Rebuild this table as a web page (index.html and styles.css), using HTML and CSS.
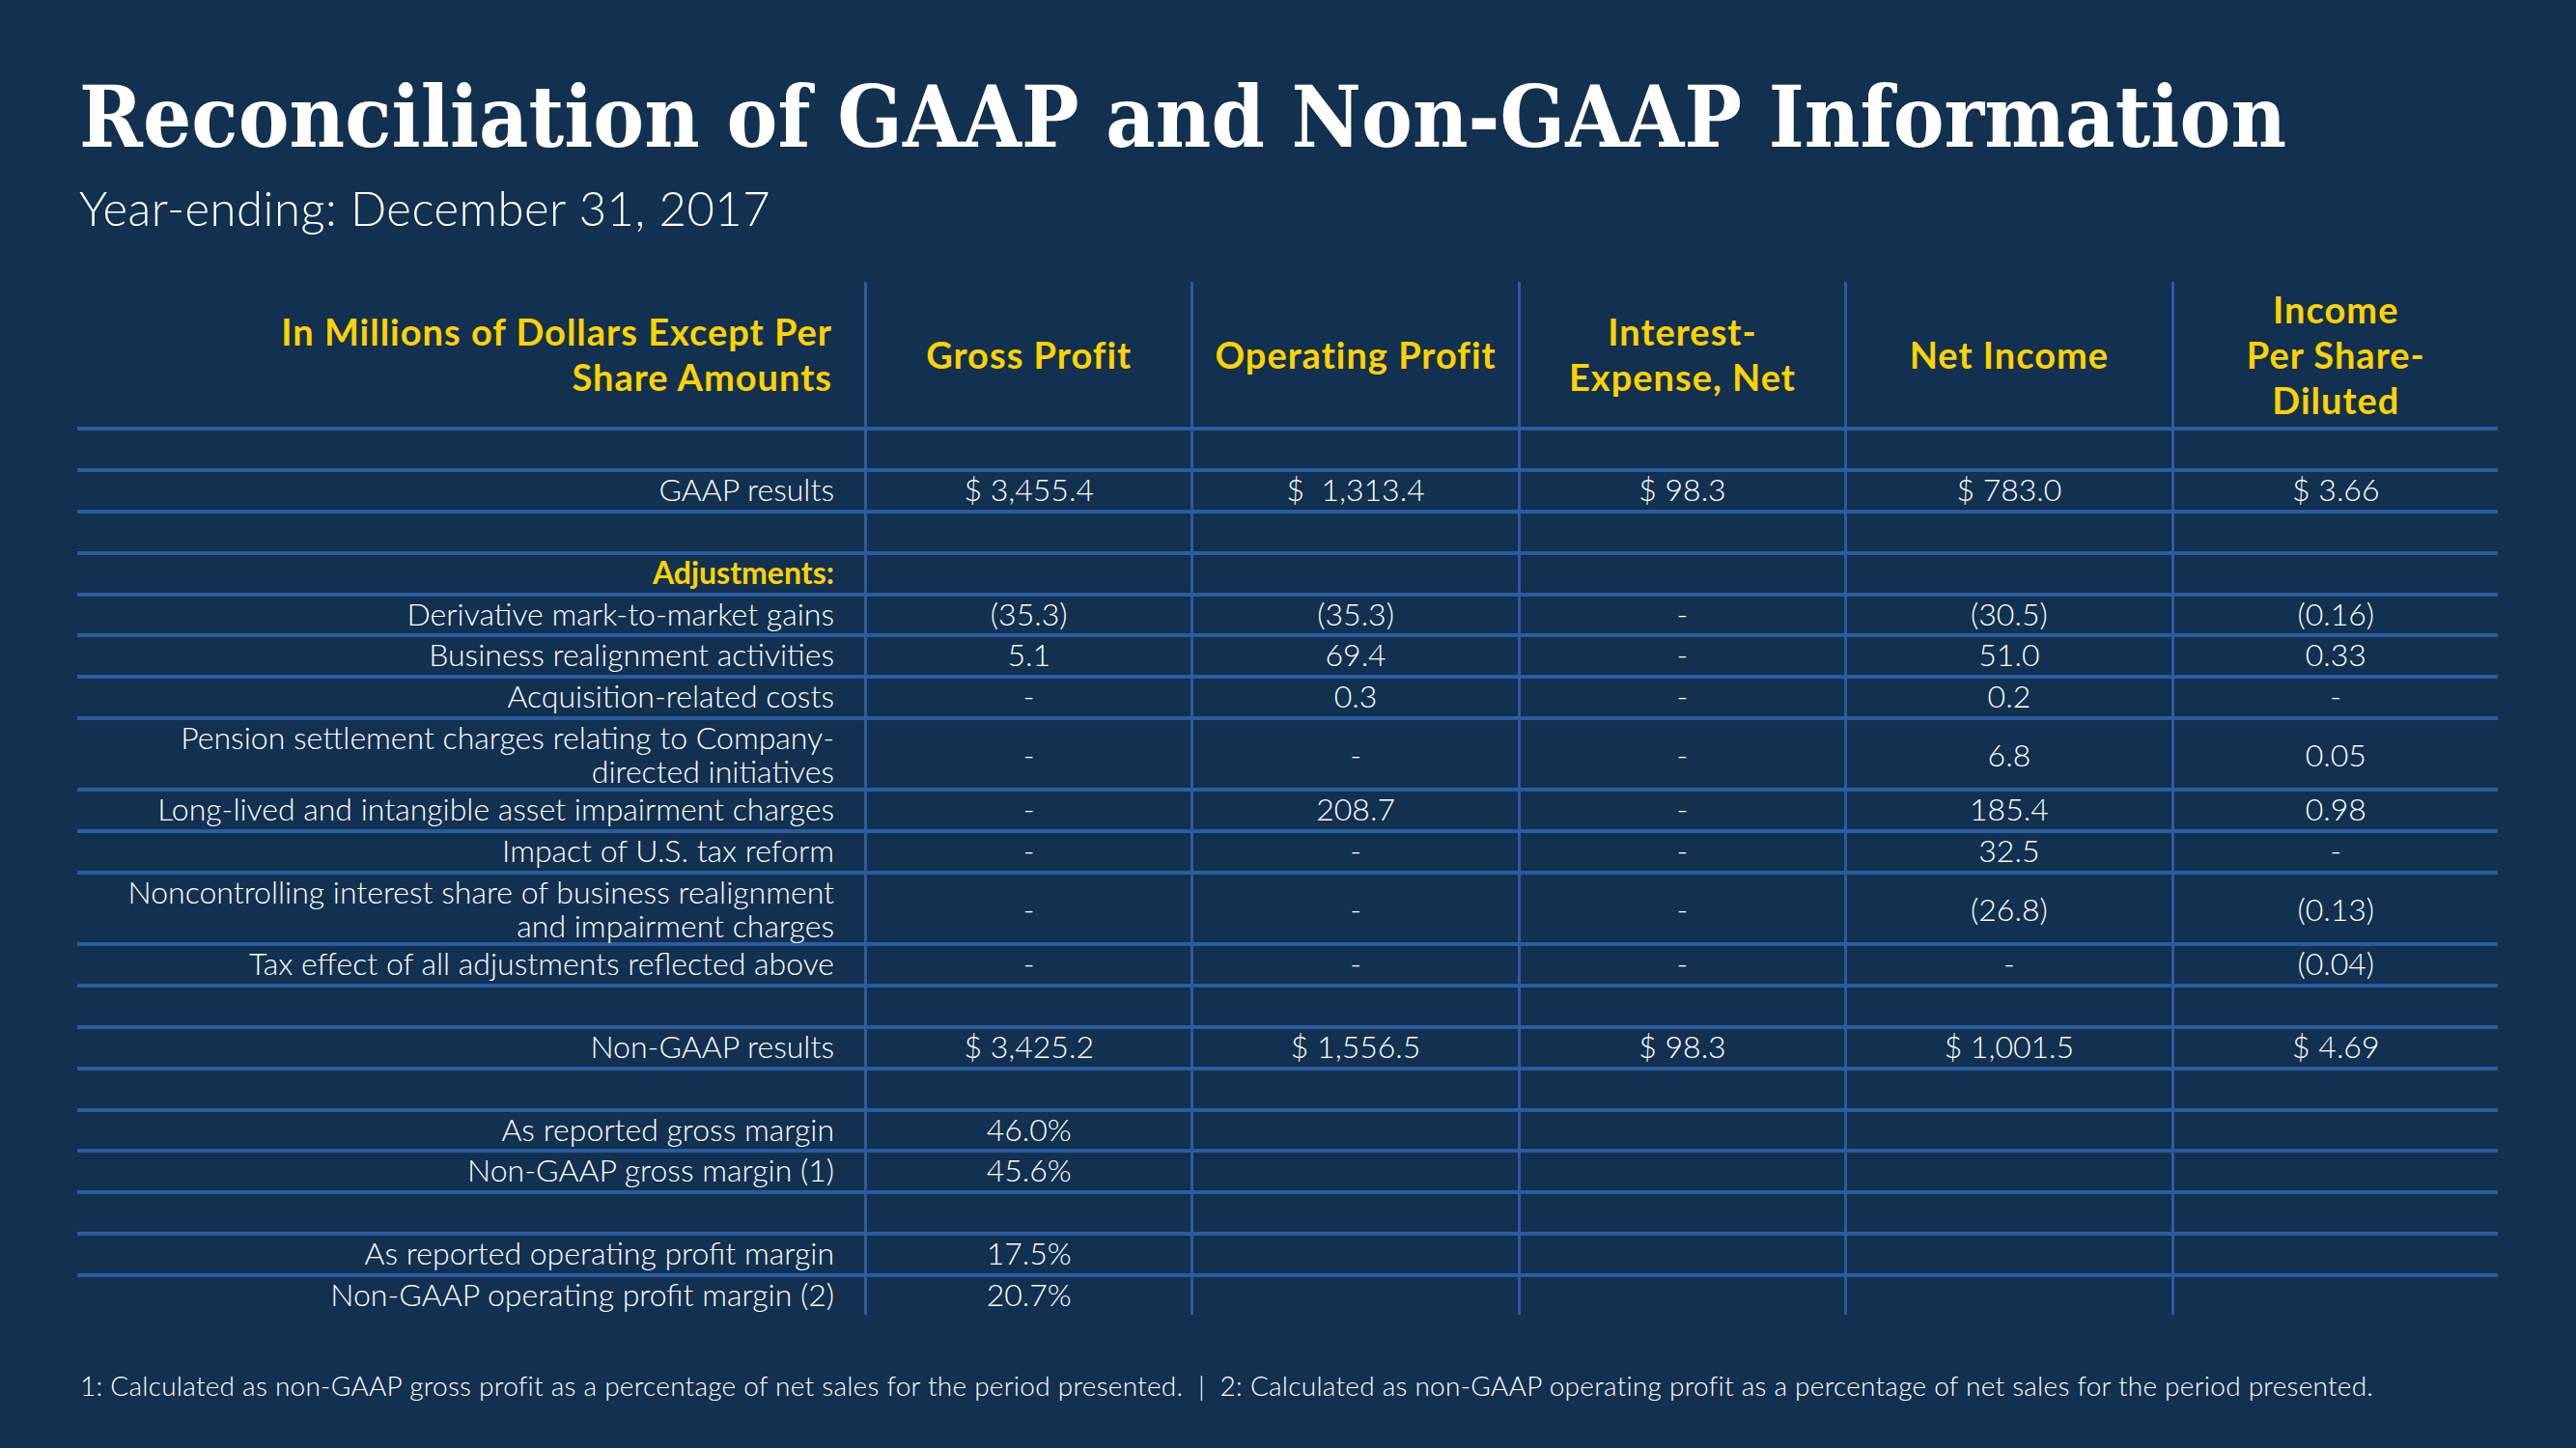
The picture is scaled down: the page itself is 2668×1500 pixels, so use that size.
FILE: index.html
```html
<!DOCTYPE html>
<html lang="en">
<head>
<meta charset="utf-8">
<title>Reconciliation of GAAP and Non-GAAP Information</title>
<link rel="stylesheet" href="styles.css">
</head>
<body>
<main class="slide">
  <h1 class="title">Reconciliation of GAAP and Non-GAAP Information</h1>
  <p class="subtitle">Year-ending: December 31, 2017</p>

  <div class="table">
    <div class="row head">
      <div class="cell label"><span class="stack">In Millions of Dollars Except Per<br>Share Amounts</span></div>
      <div class="cell">Gross Profit</div>
      <div class="cell">Operating Profit</div>
      <div class="cell"><span class="stack">Interest-<br>Expense, Net</span></div>
      <div class="cell">Net Income</div>
      <div class="cell"><span class="stack">Income<br>Per Share-<br>Diluted</span></div>
    </div>
    <div class="row"><div class="cell label"></div><div class="cell"></div><div class="cell"></div><div class="cell"></div><div class="cell"></div><div class="cell"></div></div>
    <div class="row"><div class="cell label">GAAP results</div><div class="cell">$&nbsp;3,455.4</div><div class="cell">$&nbsp;&nbsp;1,313.4</div><div class="cell">$&nbsp;98.3</div><div class="cell">$&nbsp;783.0</div><div class="cell">$&nbsp;3.66</div></div>
    <div class="row"><div class="cell label"></div><div class="cell"></div><div class="cell"></div><div class="cell"></div><div class="cell"></div><div class="cell"></div></div>
    <div class="row"><div class="cell label accent">Adjustments:</div><div class="cell"></div><div class="cell"></div><div class="cell"></div><div class="cell"></div><div class="cell"></div></div>
    <div class="row"><div class="cell label">Derivative mark-to-market gains</div><div class="cell">(35.3)</div><div class="cell">(35.3)</div><div class="cell">-</div><div class="cell">(30.5)</div><div class="cell">(0.16)</div></div>
    <div class="row"><div class="cell label">Business realignment activities</div><div class="cell">5.1</div><div class="cell">69.4</div><div class="cell">-</div><div class="cell">51.0</div><div class="cell">0.33</div></div>
    <div class="row"><div class="cell label">Acquisition-related costs</div><div class="cell">-</div><div class="cell">0.3</div><div class="cell">-</div><div class="cell">0.2</div><div class="cell">-</div></div>
    <div class="row tall"><div class="cell label"><span class="stack">Pension settlement charges relating to Company-<br>directed initiatives</span></div><div class="cell">-</div><div class="cell">-</div><div class="cell">-</div><div class="cell">6.8</div><div class="cell">0.05</div></div>
    <div class="row"><div class="cell label">Long-lived and intangible asset impairment charges</div><div class="cell">-</div><div class="cell">208.7</div><div class="cell">-</div><div class="cell">185.4</div><div class="cell">0.98</div></div>
    <div class="row"><div class="cell label">Impact of U.S. tax reform</div><div class="cell">-</div><div class="cell">-</div><div class="cell">-</div><div class="cell">32.5</div><div class="cell">-</div></div>
    <div class="row tall"><div class="cell label"><span class="stack">Noncontrolling interest share of business realignment<br>and impairment charges</span></div><div class="cell">-</div><div class="cell">-</div><div class="cell">-</div><div class="cell">(26.8)</div><div class="cell">(0.13)</div></div>
    <div class="row"><div class="cell label">Tax effect of all adjustments reflected above</div><div class="cell">-</div><div class="cell">-</div><div class="cell">-</div><div class="cell">-</div><div class="cell">(0.04)</div></div>
    <div class="row"><div class="cell label"></div><div class="cell"></div><div class="cell"></div><div class="cell"></div><div class="cell"></div><div class="cell"></div></div>
    <div class="row"><div class="cell label">Non-GAAP results</div><div class="cell">$&nbsp;3,425.2</div><div class="cell">$&nbsp;1,556.5</div><div class="cell">$&nbsp;98.3</div><div class="cell">$&nbsp;1,001.5</div><div class="cell">$&nbsp;4.69</div></div>
    <div class="row"><div class="cell label"></div><div class="cell"></div><div class="cell"></div><div class="cell"></div><div class="cell"></div><div class="cell"></div></div>
    <div class="row"><div class="cell label">As reported gross margin</div><div class="cell">46.0%</div><div class="cell"></div><div class="cell"></div><div class="cell"></div><div class="cell"></div></div>
    <div class="row"><div class="cell label">Non-GAAP gross margin (1)</div><div class="cell">45.6%</div><div class="cell"></div><div class="cell"></div><div class="cell"></div><div class="cell"></div></div>
    <div class="row"><div class="cell label"></div><div class="cell"></div><div class="cell"></div><div class="cell"></div><div class="cell"></div><div class="cell"></div></div>
    <div class="row"><div class="cell label">As reported operating profit margin</div><div class="cell">17.5%</div><div class="cell"></div><div class="cell"></div><div class="cell"></div><div class="cell"></div></div>
    <div class="row"><div class="cell label">Non-GAAP operating profit margin (2)</div><div class="cell">20.7%</div><div class="cell"></div><div class="cell"></div><div class="cell"></div><div class="cell"></div></div>
  </div>

  <p class="footer">1: Calculated as non-GAAP gross profit as a percentage of net sales for the period presented.&nbsp;&nbsp;|&nbsp;&nbsp;2: Calculated as non-GAAP operating profit as a percentage of net sales for the period presented.</p>
</main>
</body>
</html>
```

FILE: styles.css
```css
* { box-sizing: border-box; }

html, body {
  margin: 0;
  padding: 0;
  background: #12304f;
}

body {
  width: 2668px;
  height: 1500px;
  overflow: hidden;
  color: #ffffff;
  font-family: Lato, "Liberation Sans", sans-serif;
  font-weight: 300;
}

.slide {
  padding: 72px 80px 0 80px;
}

.title {
  margin: 0 0 0 2px;
  font-family: "DejaVu Serif Condensed", "DejaVu Serif", serif;
  font-stretch: semi-condensed;
  font-weight: 700;
  font-size: 88px;
  letter-spacing: 0.1px;
  line-height: 98px;
  height: 98px;
  white-space: nowrap;
  color: #ffffff;
}

.subtitle {
  margin: 21px 0 0 2px;
  font-size: 49px;
  line-height: 49px;
  letter-spacing: 0.5px;
  font-weight: 300;
}

.table {
  margin-top: 52px;
  width: 2507px;
}

.row {
  display: grid;
  grid-template-columns: 815px repeat(5, 1fr);
  border-top: 4px solid #2b5ba0;
  height: 42.9px;
}

.row.tall { height: 74px; }

.row.head {
  border-top: 0;
  height: 150px;
}

.cell {
  display: flex;
  align-items: center;
  justify-content: center;
  text-align: center;
  border-left: 3px solid #2b5ba0;
  padding-bottom: 4px;
  font-size: 32px;
  line-height: 35px;
  white-space: nowrap;
}

.cell.label {
  border-left: 0;
  justify-content: flex-end;
  text-align: right;
  padding-right: 31px;
}

.stack { display: block; }

.head .cell {
  padding-bottom: 0;
  color: #ffd200;
  font-weight: 700;
  font-size: 38px;
  letter-spacing: 1px;
  line-height: 47px;
}

.head .cell.label { padding-right: 33px; }

.cell.accent {
  color: #ffd200;
  font-weight: 700;
}

.footer {
  margin: 57px 0 0 3px;
  font-size: 28px;
  line-height: 32px;
  letter-spacing: 0.25px;
  white-space: nowrap;
}
```
